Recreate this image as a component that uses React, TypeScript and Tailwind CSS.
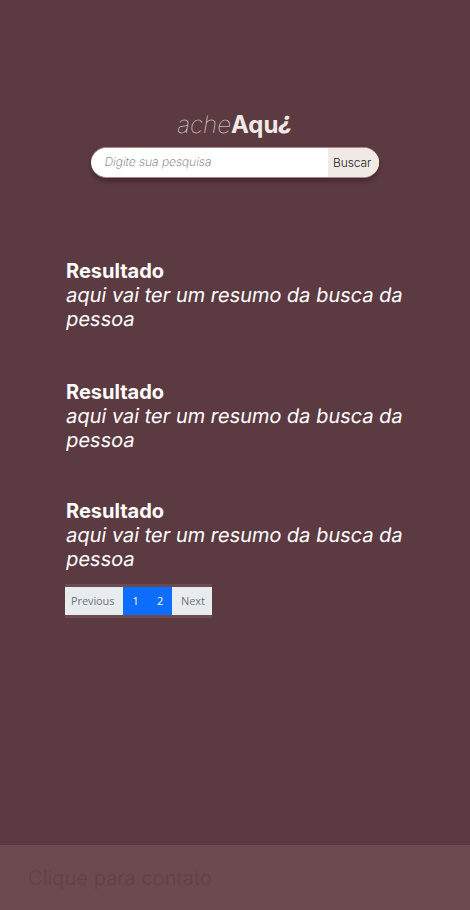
const results = [
  { title: 'Resultado', summary: ['aqui vai ter um resumo da busca da', 'pessoa'], space: 'mb-[49px]' },
  { title: 'Resultado', summary: ['aqui vai ter um resumo da busca da', 'pessoa'], space: 'mb-[47px]' },
  { title: 'Resultado', summary: ['aqui vai ter um resumo da busca da', 'pessoa'], space: 'mb-[13px]' },
];

function Logo() {
  return (
    <h1 className="ml-[176px] flex h-[29px] whitespace-nowrap text-2xl leading-[29px] text-[#f1eae4]">
      <span className="w-[55px] origin-[0_85%] -skew-x-[9.4deg] font-thin tracking-[0.2px]">ache</span>
      <span className="font-bold">Aqu</span>
      <span className="-translate-y-[4px] translate-x-px -skew-x-[9.4deg] font-extrabold">¿</span>
    </h1>
  );
}

function SearchBar() {
  return (
    <form className="ml-[91px] mt-[8px] flex h-[31px] w-[288px] overflow-hidden rounded-full border-y border-[#a9868d] bg-white shadow-[0_4px_4px_rgba(0,0,0,0.25)]">
      <div className="flex w-[237px] items-center pb-[2px] pl-[12.5px] text-xs font-extralight text-[#666]">
        <span className="origin-[0_75%] -skew-x-[9.4deg]">Digite sua pesquisa</span>
      </div>
      <button type="button" className="flex flex-1 items-center bg-[#f1eae4] pl-[5px] text-xs font-light tracking-[-0.1px] text-[#222]">
        Buscar
      </button>
    </form>
  );
}

function Pagination() {
  return (
    <nav className="ml-[65px] flex h-[34px] w-[147px] border-y-[3px] border-[#6b4a51] font-['Open_Sans',sans-serif] text-[11px] tracking-[-0.1px] text-[#6c757d]">
      <span className="flex w-[58px] items-center bg-[#e9ecef] pl-[6px]">Previous</span>
      <span className="flex w-[25px] items-center justify-center bg-[#0d6efd] font-medium text-white">1</span>
      <span className="flex w-[24px] items-center justify-center bg-[#0d6efd] font-medium text-white">2</span>
      <span className="flex flex-1 items-center bg-[#e9ecef] pl-[9px]">Next</span>
    </nav>
  );
}

export default function App() {
  return (
    <div className="flex h-[910px] w-[470px] flex-col overflow-hidden bg-[#5c3a41] pt-[110px] font-[Inter,sans-serif]">
      <Logo />
      <SearchBar />
      <main className="mt-[81px]">
        {results.map((r, i) => (
          <article key={i} className={`ml-[66px] w-[345px] text-xl leading-6 text-white ${r.space}`}>
            <h2 className="font-bold">{r.title}</h2>
            <p className="font-normal tracking-[-0.01px]">
              {r.summary.map((line) => (
                <span key={line} className="-ml-px block origin-[0_85%] -skew-x-[9.4deg] whitespace-nowrap">
                  {line}
                </span>
              ))}
            </p>
          </article>
        ))}
        <Pagination />
      </main>
      <footer className="mt-auto flex h-[65px] items-center bg-[#6b4a50] pl-[28px] text-xl font-light tracking-[0.12px] text-[#614147]">
        Clique para contato
      </footer>
    </div>
  );
}
